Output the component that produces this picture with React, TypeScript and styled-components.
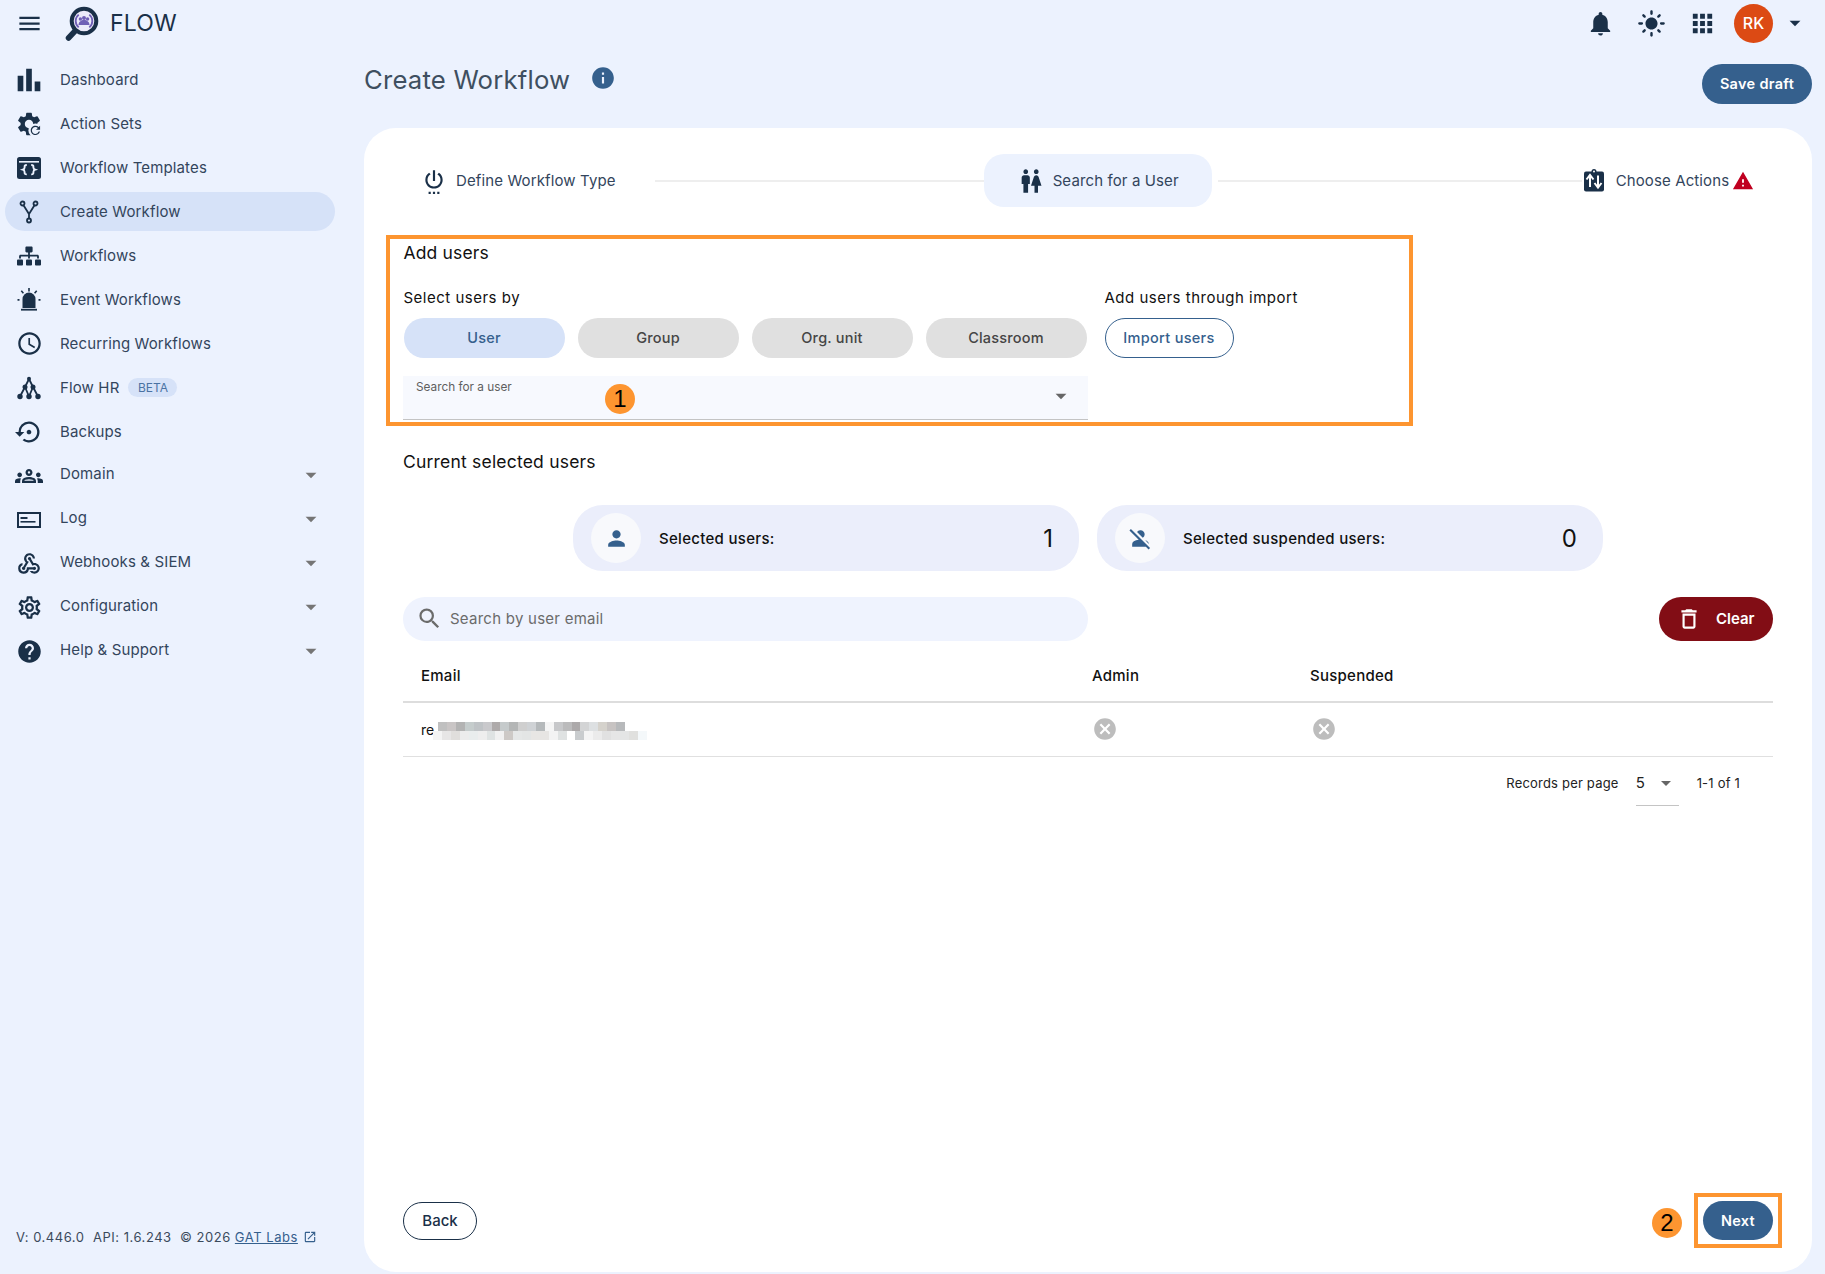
import React from 'react';
import styled, { createGlobalStyle } from 'styled-components';
import {
  MdMenu, MdBarChart, MdOutlineSchedule, MdSettingsBackupRestore, MdOutlineGroups, MdWebhook,
  MdOutlineSettings, MdHelp, MdNotifications, MdLightMode, MdApps, MdInfo, MdSettingsPower, MdWc,
  MdWarning, MdPerson, MdPersonOff, MdSearch, MdDeleteOutline, MdCancel, MdOpenInNew, MdArrowDropDown,
} from 'react-icons/md';
import { FaSitemap } from 'react-icons/fa';

const ink = '#1a3048';
const blue = '#35608d';
const orange = '#fd9530';

const GlobalStyle = createGlobalStyle`
  html, body { margin: 0; padding: 0; background: #ecf2fe; }
  body { font-family: Inter, "Noto Sans", sans-serif; color: ${ink}; }
  * { box-sizing: border-box; }
  svg { flex: none; }
`;

const Page = styled.div`
  width: 1825px;
  height: 1274px;
  display: flex;
  flex-direction: column;
  overflow: hidden;
`;

const Topbar = styled.header`
  height: 46px;
  flex: none;
  display: flex;
  align-items: center;
  padding: 0 17px 0 16px;
`;

const MenuButton = styled.span`
  width: 26px;
  display: flex;
  justify-content: center;
  color: ${ink};
`;

const Brand = styled.div`
  display: flex;
  align-items: center;
  margin-left: 22px;
  gap: 8px;
  font-size: 23px;
  letter-spacing: 0.2px;
  color: ${ink};
`;

const TopActions = styled.div`
  margin-left: auto;
  display: flex;
  align-items: center;
  color: ${ink};
`;

const TopIcon = styled.span`
  width: 51px;
  display: flex;
  justify-content: center;
`;

const Avatar = styled.span`
  width: 39px;
  height: 39px;
  border-radius: 50%;
  background: #dc4a14;
  color: #fff;
  font-size: 16px;
  font-weight: 500;
  display: flex;
  align-items: center;
  justify-content: center;
  margin-left: 6px;
`;

const AvatarCaret = styled.span`
  display: flex;
  margin-left: 9px;
`;

const Body = styled.div`
  flex: 1;
  display: flex;
  min-height: 0;
`;

const Sidebar = styled.aside`
  width: 364px;
  flex: none;
  display: flex;
  flex-direction: column;
  padding-top: 14px;
`;

const NavItem = styled.div<{ $active?: boolean }>`
  width: 330px;
  height: 39px;
  margin: 0 0 5px 5px;
  padding: 0 12px;
  border-radius: 20px;
  display: flex;
  align-items: center;
  background: ${(p) => (p.$active ? '#d6e2f8' : 'transparent')};
`;

const NavIcon = styled.span`
  width: 24px;
  height: 24px;
  flex: none;
  display: flex;
  align-items: center;
  justify-content: center;
  color: ${ink};
`;

const NavLabel = styled.span<{ $lifted?: boolean }>`
  margin-left: 19px;
  font-size: 15px;
  letter-spacing: 0.13px;
  color: #33455c;
  padding-bottom: ${(p) => (p.$lifted ? '5px' : '0')};
`;

const BetaChip = styled.span`
  margin-left: 9px;
  width: 49px;
  height: 19px;
  border-radius: 10px;
  background: #d6e2f8;
  color: #4a72a3;
  font-size: 12px;
  display: flex;
  align-items: center;
  justify-content: center;
`;

const NavCaret = styled.span`
  margin-left: auto;
  margin-right: -1px;
  margin-bottom: 1px;
  display: flex;
  color: #757575;
`;

const SideFooter = styled.div`
  margin-top: auto;
  padding: 0 0 29px 16px;
  height: 45px;
  display: flex;
  align-items: center;
  font-size: 13px;
  letter-spacing: 0.53px;
  color: #3b4a5c;
  white-space: pre;
`;

const FooterLink = styled.a`
  color: ${blue};
  text-decoration: underline;
  margin-left: 4px;
`;

const FooterLinkIcon = styled.span`
  display: flex;
  margin-left: 5px;
  color: ${blue};
`;

const Content = styled.main`
  flex: 1;
  display: flex;
  flex-direction: column;
  padding: 0 13px 2px 0;
  min-width: 0;
`;

const TitleRow = styled.div`
  height: 82px;
  flex: none;
  padding-top: 18px;
  display: flex;
  align-items: flex-start;
`;

const PageTitle = styled.h1`
  margin: 0;
  height: 30px;
  line-height: 31px;
  font-size: 25.7px;
  font-weight: 400;
  letter-spacing: 0.2px;
  color: #3e4f60;
`;

const InfoIcon = styled.span`
  margin: 1px 0 0 20px;
  display: flex;
  color: ${blue};
`;

const PrimaryButton = styled.button`
  height: 40px;
  border: 0;
  border-radius: 20px;
  background: ${blue};
  color: #fff;
  font: 600 14.5px Inter, sans-serif;
  letter-spacing: 0.3px;
  padding: 0 0 2px;
`;

const SaveDraft = styled(PrimaryButton)`
  margin-left: auto;
  width: 110px;
`;

const Panel = styled.section`
  flex: 1;
  background: #fff;
  border-radius: 32px;
  padding: 26px 39px 24px;
  display: flex;
  flex-direction: column;
  min-height: 0;
`;

const Stepper = styled.div`
  height: 53px;
  flex: none;
  display: flex;
  align-items: center;
  padding-left: 19px;
`;

const Step = styled.div<{ $active?: boolean; $trail?: number }>`
  height: 53px;
  display: flex;
  align-items: center;
  gap: 10px;
  font-size: 15px;
  letter-spacing: 0.12px;
  color: #33455c;
  flex: none;
  padding-right: ${(p) => p.$trail ?? 0}px;
  ${(p) =>
    p.$active
      ? `
    width: 228px;
    padding-left: 35px;
    margin-right: 6px;
    border-radius: 20px;
    background: #ecf2fe;
  `
      : ''}
`;

const StepIcon = styled.span`
  width: 24px;
  display: flex;
  justify-content: center;
  color: ${ink};
`;

const StepWarning = styled.span`
  display: flex;
  margin-left: -7px;
  color: #c00020;
`;

const StepLine = styled.span<{ $w: number }>`
  width: ${(p) => p.$w}px;
  height: 2px;
  flex: none;
  background: #eeeeee;
`;

const AddBox = styled.div`
  margin: 28px 0 0 -17px;
  width: 1027px;
  height: 191px;
  flex: none;
  border: 4px solid ${orange};
  padding: 0 13.5px;
  position: relative;
  display: flex;
  flex-direction: column;
`;

const BoxTitle = styled.div`
  margin-top: 4px;
  line-height: 20px;
  font-size: 17.5px;
  color: #111;
  letter-spacing: 0.15px;
`;

const PickRow = styled.div`
  margin-top: 25px;
  display: flex;
  gap: 18px;
`;

const PickColumn = styled.div`
  display: flex;
  flex-direction: column;
`;

const PickLabel = styled.div`
  line-height: 20px;
  font-size: 15px;
  letter-spacing: 0.5px;
  color: #111;
  margin-bottom: 10px;
`;

const Choices = styled.div`
  display: flex;
  gap: 13px;
`;

const Choice = styled.button<{ $active?: boolean }>`
  width: 161px;
  height: 40px;
  border: 0;
  border-radius: 20px;
  padding: 0 0 2px;
  background: ${(p) => (p.$active ? '#d6e2f8' : '#e0e0e0')};
  color: ${(p) => (p.$active ? blue : '#454545')};
  font: 500 14.5px Inter, sans-serif;
  letter-spacing: 0.2px;
`;

const ImportButton = styled.button`
  width: 129px;
  height: 40px;
  border: 1.5px solid ${blue};
  border-radius: 20px;
  background: #fff;
  padding: 0 0 2px;
  color: ${blue};
  font: 500 14.5px Inter, sans-serif;
  letter-spacing: 0.3px;
`;

const UserField = styled.div`
  margin: 18px 0 0 -0.5px;
  width: 685px;
  height: 44px;
  background: #f7f9fe;
  border-bottom: 1px solid #c4c4c4;
  padding: 4px 13px 0;
  position: relative;
  font-size: 11.8px;
  color: #5f5f5f;
`;

const FieldCaret = styled.span`
  position: absolute;
  right: 14px;
  top: 7px;
  display: flex;
  color: #666;
`;

const NumberBadge = styled.span`
  width: 30px;
  height: 30px;
  border-radius: 50%;
  background: ${orange};
  color: #000;
  font: 400 24px "Liberation Sans", Arial, sans-serif;
  display: flex;
  align-items: center;
  justify-content: center;
  flex: none;
`;

const FieldBadge = styled(NumberBadge)`
  position: absolute;
  left: 202px;
  top: 8px;
`;

const NextBadge = styled(NumberBadge)`
  margin-top: 5px;
`;

const SectionTitle = styled.div`
  margin-top: 26px;
  line-height: 20px;
  font-size: 17.5px;
  letter-spacing: 0.2px;
  color: #111;
`;

const StatRow = styled.div`
  margin-top: 33px;
  display: flex;
  justify-content: center;
  gap: 18px;
`;

const StatCard = styled.div`
  width: 506px;
  height: 66px;
  border-radius: 30px;
  background: #ebeefb;
  display: flex;
  align-items: center;
  padding: 0 26px 0 18px;
`;

const StatIcon = styled.span`
  width: 50px;
  height: 50px;
  border-radius: 50%;
  background: #f8f9fc;
  color: ${blue};
  display: flex;
  align-items: center;
  justify-content: center;
`;

const StatLabel = styled.span`
  margin-left: 18px;
  font-size: 15px;
  font-weight: 500;
  letter-spacing: 0.3px;
  color: #111;
`;

const StatValue = styled.span`
  margin-left: auto;
  font-size: 24px;
  color: #111;
`;

const Toolbar = styled.div`
  margin-top: 26px;
  height: 44px;
  flex: none;
  display: flex;
  justify-content: space-between;
`;

const SearchBox = styled.div`
  width: 685px;
  height: 44px;
  border-radius: 22px;
  background: #eff3fe;
  display: flex;
  align-items: center;
  padding: 0 0 1px 13px;
  gap: 7px;
  font-size: 15px;
  letter-spacing: 0.25px;
  color: #6b6b6b;
`;

const ClearButton = styled.button`
  width: 114px;
  height: 44px;
  border: 0;
  border-radius: 22px;
  background: #820d15;
  color: #fff;
  font: 600 15px Inter, sans-serif;
  display: flex;
  align-items: center;
  padding: 0 0 1px 20px;
  gap: 17px;
`;

const TrashIcon = styled.span`
  display: flex;
  margin: 0 -3px;
`;

const TableRow = styled.div<{ $head?: boolean }>`
  display: grid;
  grid-template-columns: 671px 218px 1fr;
  height: ${(p) => (p.$head ? '62px' : '54px')};
  align-items: center;
  border-bottom: ${(p) => (p.$head ? '2px solid #dddddd' : '1px solid #e0e0e0')};
  padding: ${(p) => (p.$head ? '8px 0 0' : '0 0 1px')};
`;

const HeadCell = styled.div`
  padding-left: 18px;
  font-size: 15px;
  font-weight: 500;
  letter-spacing: 0.25px;
  color: #111;
`;

const Cell = styled.div<{ $nudge?: number }>`
  padding-left: ${(p) => 18 + (p.$nudge ?? 0)}px;
  font-size: 14px;
  display: flex;
  align-items: center;
  color: #111;
`;

const BlurredEmail = styled.div`
  margin-left: -1px;
  margin-top: 3px;
  display: flex;
  flex-direction: column;
`;

const BlurRow = styled.div<{ $inset?: boolean }>`
  display: flex;
  height: 9px;
  margin-left: ${(p) => (p.$inset ? '5px' : '0')};
`;

const BlurCell = styled.span<{ $c: string }>`
  width: 8.9px;
  background: ${(p) => p.$c};
`;

const StatusIcon = styled.span`
  display: flex;
  color: #bdbdbd;
`;

const Pagination = styled.div`
  flex: none;
  display: flex;
  align-items: flex-start;
  justify-content: flex-end;
  padding: 18px 33px 0 0;
  line-height: 16px;
  font-size: 13px;
  letter-spacing: 0.2px;
  color: #222;
`;

const PageSize = styled.div`
  margin-left: 17px;
  width: 43px;
  height: 31px;
  display: flex;
  align-items: flex-start;
  justify-content: space-between;
  border-bottom: 1px solid #c4c4c4;
  font-size: 15px;
`;

const PageSizeCaret = styled.span`
  display: flex;
  color: #666;
  margin: -4px 1px 0 0;
`;

const PageRange = styled.span`
  margin-left: 18px;
`;

const PanelFooter = styled.div`
  margin-top: auto;
  display: flex;
  align-items: center;
  justify-content: space-between;
`;

const BackButton = styled.button`
  width: 74px;
  height: 38px;
  border: 1.5px solid ${ink};
  border-radius: 19px;
  background: #fff;
  color: ${ink};
  font: 500 15px Inter, sans-serif;
`;

const NextGroup = styled.div`
  display: flex;
  align-items: center;
  gap: 12px;
  margin-right: -9px;
`;

const NextFrame = styled.div`
  width: 88px;
  height: 55px;
  border: 4px solid ${orange};
  display: flex;
  align-items: center;
  justify-content: center;
`;

const NextButton = styled(PrimaryButton)`
  width: 70px;
  height: 39px;
  padding: 0;
`;

const Logo = () => (
  <svg width="38" height="38" viewBox="0 0 38 38">
    <line x1="12" y1="26" x2="4.5" y2="34" stroke={ink} strokeWidth="5.5" strokeLinecap="round" />
    <circle cx="20" cy="17" r="12.3" fill="#ebeaf9" stroke={ink} strokeWidth="4" />
    <path d="M14.7 10.6a8.3 8.3 0 0 0 0 12.8M25.3 10.6a8.3 8.3 0 0 1 0 12.8" fill="none" stroke="#6f5fb5" strokeWidth="1.8" />
    <circle cx="20" cy="14" r="2" fill="#6f5fb5" />
    <circle cx="16.4" cy="15" r="1.7" fill="#6f5fb5" />
    <circle cx="23.6" cy="15" r="1.7" fill="#6f5fb5" />
    <path d="M14.5 21c0-3 2.5-5 5.5-5s5.5 2 5.5 5z" fill="#6f5fb5" />
  </svg>
);

const gearPath =
  'M19.14 12.94c.04-.3.06-.61.06-.94 0-.32-.02-.64-.07-.94l2.03-1.58a.49.49 0 0 0 .12-.61l-1.92-3.32a.488.488 0 0 0-.59-.22l-2.39.96c-.5-.38-1.03-.7-1.62-.94l-.36-2.54a.484.484 0 0 0-.48-.41h-3.84c-.24 0-.43.17-.47.41l-.36 2.54c-.59.24-1.13.57-1.62.94l-2.39-.96c-.22-.08-.47 0-.59.22L2.74 8.87c-.12.21-.08.47.12.61l2.03 1.58c-.05.3-.09.63-.09.94s.02.64.07.94l-2.03 1.58a.49.49 0 0 0-.12.61l1.92 3.32c.12.22.37.29.59.22l2.39-.96c.5.38 1.03.7 1.62.94l.36 2.54c.05.24.24.41.48.41h3.84c.24 0 .44-.17.47-.41l.36-2.54c.59-.24 1.13-.56 1.62-.94l2.39.96c.22.08.47 0 .59-.22l1.92-3.32c.12-.22.07-.47-.12-.61l-2.01-1.58zM12 15.6c-1.98 0-3.6-1.62-3.6-3.6s1.62-3.6 3.6-3.6 3.6 1.62 3.6 3.6-1.62 3.6-3.6 3.6z';

const ActionSetsIcon = () => (
  <svg width="28" height="28" viewBox="0 0 24 24" fill="currentColor">
    <path d={gearPath} />
    <circle cx="17.5" cy="17.5" r="6" fill="#ecf2fe" />
    <path
      transform="translate(11.5 11.5) scale(.5)"
      d="M17.65 6.35A7.958 7.958 0 0 0 12 4c-4.42 0-7.99 3.58-7.99 8s3.57 8 7.99 8c3.73 0 6.84-2.55 7.73-6h-2.08A5.99 5.99 0 0 1 12 18c-3.31 0-6-2.69-6-6s2.69-6 6-6c1.66 0 3.14.69 4.22 1.78L13 11h7V4l-2.35 2.35z"
    />
  </svg>
);

const TemplatesIcon = () => (
  <svg width="24" height="24" viewBox="0 0 24 24">
    <rect x="0" y="1" width="24" height="22" rx="2.5" fill={ink} />
    <rect x="2" y="5" width="20" height="1.6" fill="#ecf2fe" />
    <path
      d="M9.8 9c-2.4 0-2.2 1.2-2.2 2.4s-.3 1.8-1.8 2.3c1.5.5 1.8 1.1 1.8 2.3s-.2 2.4 2.2 2.4M14.2 9c2.4 0 2.2 1.2 2.2 2.4s.3 1.8 1.8 2.3c-1.5.5-1.8 1.1-1.8 2.3s.2 2.4-2.2 2.4"
      fill="none"
      stroke="#ecf2fe"
      strokeWidth="1.9"
    />
  </svg>
);

const ForkIcon = () => (
  <svg width="24" height="24" viewBox="0 0 24 24" fill="none" stroke={ink} strokeWidth="1.8">
    <circle cx="5.5" cy="3.5" r="2" />
    <circle cx="18.5" cy="3.5" r="2" />
    <circle cx="12" cy="20.5" r="2" />
    <path d="M6.5 5.3 12 14l5.5-8.7M12 14v4.5" />
  </svg>
);

const SirenIcon = () => (
  <svg width="24" height="24" viewBox="0 0 24 24" fill={ink}>
    <path d="M5.5 20v-9a6.5 6.5 0 0 1 13 0v9z" />
    <rect x="4" y="20.8" width="16" height="1.8" />
    <path d="M11.2 0h1.6v3.4h-1.6zM3.7 3.2l1.2-1 2.1 2.6-1.2 1zM19.1 2.2l1.2 1-2.1 2.6-1.2-1zM.5 11h2v1.8h-2zM21.5 11h2v1.8h-2z" />
  </svg>
);

const FlowHrIcon = () => (
  <svg width="24" height="24" viewBox="0 0 24 24" fill={ink} stroke={ink} strokeWidth="1.8">
    <path d="M12 3 8 11l-5 9.5M8 11l4 9.5M12 3l4 8 5 9.5M16 11l-4 9.5" fill="none" />
    <circle cx="12" cy="2.8" r="2" stroke="none" />
    <circle cx="8" cy="11" r="2.5" stroke="none" />
    <circle cx="16" cy="11" r="2.5" stroke="none" />
    <circle cx="3" cy="20.5" r="2.7" stroke="none" />
    <circle cx="12" cy="20.5" r="2.7" stroke="none" />
    <circle cx="21" cy="20.5" r="2.7" stroke="none" />
  </svg>
);

const LogIcon = () => (
  <svg width="24" height="24" viewBox="0 0 24 24" fill="none">
    <rect x="1" y="5" width="22" height="14" stroke={ink} strokeWidth="2" />
    <rect x="3.5" y="9" width="7" height="2" fill={ink} />
    <rect x="3.5" y="13" width="15" height="1.6" fill={ink} />
  </svg>
);

const ChooseActionsIcon = () => (
  <svg width="22" height="23" viewBox="0 0 22 23">
    <rect x="1" y="2.5" width="20" height="20" rx="2" fill={ink} />
    <circle cx="11" cy="2.5" r="2.5" fill={ink} />
    <circle cx="11" cy="2.5" r="1" fill="#fff" />
    <path
      d="M7 18V7M3.5 10.5 7 6l3.5 4.5M15 6.5v11.5M11.5 14 15 18.5l3.5-4.5"
      fill="none"
      stroke="#fff"
      strokeWidth="2"
    />
  </svg>
);

const navItems: { label: string; icon: React.ReactNode; beta?: boolean; active?: boolean; expand?: boolean }[] = [
  { label: 'Dashboard', icon: <MdBarChart size={34} /> },
  { label: 'Action Sets', icon: <ActionSetsIcon /> },
  { label: 'Workflow Templates', icon: <TemplatesIcon /> },
  { label: 'Create Workflow', icon: <ForkIcon />, active: true },
  { label: 'Workflows', icon: <FaSitemap size={24} /> },
  { label: 'Event Workflows', icon: <SirenIcon /> },
  { label: 'Recurring Workflows', icon: <MdOutlineSchedule size={27} /> },
  { label: 'Flow HR', icon: <FlowHrIcon />, beta: true },
  { label: 'Backups', icon: <MdSettingsBackupRestore size={28} /> },
  { label: 'Domain', icon: <MdOutlineGroups size={28} />, expand: true },
  { label: 'Log', icon: <LogIcon />, expand: true },
  { label: 'Webhooks & SIEM', icon: <MdWebhook size={26} />, expand: true },
  { label: 'Configuration', icon: <MdOutlineSettings size={27} />, expand: true },
  { label: 'Help & Support', icon: <MdHelp size={27} />, expand: true },
];

const blurTop = [
  '#c0c0c0', '#c9c5c5', '#b3b3b3', '#c5cccc', '#bfc3c6', '#c9c9cc', '#aeaaaa', '#c5cacb', '#b4b6b6', '#cfcfcf', '#cfd2d5',
  '#b5b9bb', '#f5f5f5', '#c7c8ca', '#bbbbbc', '#aca9aa', '#d3d4d5', '#dde0e2', '#d5d2cc', '#c7c3c2', '#b7b9bb',
];
const blurBottom = [
  '#f4f4f4', '#e7e6e6', '#e0dedc', '#ececec', '#e9eded', '#eeeeee', '#dfe3e3', '#f1f1f1', '#cdc9c6', '#e5e7e7', '#e3e5e5', '#e8e6e4',
  '#e7e5e3', '#f3f3f3', '#dfe2e2', '#ffffff', '#c9ccce', '#f4f4f4', '#ebebeb', '#e1e1e1', '#e6e6e6', '#e4e5e5', '#e0e0de', '#f4f8fa',
];

export default function App() {
  return (
    <Page>
      <GlobalStyle />
      <Topbar>
        <MenuButton>
          <MdMenu size={27} />
        </MenuButton>
        <Brand>
          <Logo />
          FLOW
        </Brand>
        <TopActions>
          <TopIcon>
            <MdNotifications size={29} />
          </TopIcon>
          <TopIcon>
            <MdLightMode size={29} />
          </TopIcon>
          <TopIcon>
            <MdApps size={29} />
          </TopIcon>
          <Avatar>RK</Avatar>
          <AvatarCaret>
            <MdArrowDropDown size={26} />
          </AvatarCaret>
        </TopActions>
      </Topbar>
      <Body>
        <Sidebar>
          {navItems.map((item) => (
            <NavItem key={item.label} $active={item.active}>
              <NavIcon>{item.icon}</NavIcon>
              <NavLabel $lifted={item.expand}>{item.label}</NavLabel>
              {item.beta && <BetaChip>BETA</BetaChip>}
              {item.expand && (
                <NavCaret>
                  <MdArrowDropDown size={26} />
                </NavCaret>
              )}
            </NavItem>
          ))}
          <SideFooter>
            {'V: 0.446.0  API: 1.6.243  © 2026'}
            <FooterLink>GAT Labs</FooterLink>
            <FooterLinkIcon>
              <MdOpenInNew size={14} />
            </FooterLinkIcon>
          </SideFooter>
        </Sidebar>
        <Content>
          <TitleRow>
            <PageTitle>Create Workflow</PageTitle>
            <InfoIcon>
              <MdInfo size={26} />
            </InfoIcon>
            <SaveDraft>Save draft</SaveDraft>
          </TitleRow>
          <Panel>
            <Stepper>
              <Step $trail={39}>
                <StepIcon>
                  <MdSettingsPower size={26} />
                </StepIcon>
                Define Workflow Type
              </Step>
              <StepLine $w={329} />
              <Step $active>
                <StepIcon>
                  <MdWc size={28} />
                </StepIcon>
                Search for a User
              </Step>
              <StepLine $w={364} />
              <Step>
                <StepIcon>
                  <ChooseActionsIcon />
                </StepIcon>
                <span>Choose Actions</span>
                <StepWarning>
                  <MdWarning size={22} />
                </StepWarning>
              </Step>
            </Stepper>
            <AddBox>
              <BoxTitle>Add users</BoxTitle>
              <PickRow>
                <PickColumn>
                  <PickLabel>Select users by</PickLabel>
                  <Choices>
                    <Choice $active>User</Choice>
                    <Choice>Group</Choice>
                    <Choice>Org. unit</Choice>
                    <Choice>Classroom</Choice>
                  </Choices>
                </PickColumn>
                <PickColumn>
                  <PickLabel>Add users through import</PickLabel>
                  <ImportButton>Import users</ImportButton>
                </PickColumn>
              </PickRow>
              <UserField>
                Search for a user
                <FieldBadge>1</FieldBadge>
                <FieldCaret>
                  <MdArrowDropDown size={26} />
                </FieldCaret>
              </UserField>
            </AddBox>
            <SectionTitle>Current selected users</SectionTitle>
            <StatRow>
              <StatCard>
                <StatIcon>
                  <MdPerson size={25} />
                </StatIcon>
                <StatLabel>Selected users:</StatLabel>
                <StatValue>1</StatValue>
              </StatCard>
              <StatCard>
                <StatIcon>
                  <MdPersonOff size={25} />
                </StatIcon>
                <StatLabel>Selected suspended users:</StatLabel>
                <StatValue>0</StatValue>
              </StatCard>
            </StatRow>
            <Toolbar>
              <SearchBox>
                <MdSearch size={27} color="#6b6b6b" />
                Search by user email
              </SearchBox>
              <ClearButton>
                <TrashIcon>
                  <MdDeleteOutline size={26} />
                </TrashIcon>
                Clear
              </ClearButton>
            </Toolbar>
            <TableRow $head>
              <HeadCell>Email</HeadCell>
              <HeadCell>Admin</HeadCell>
              <HeadCell>Suspended</HeadCell>
            </TableRow>
            <TableRow>
              <Cell>
                re
                <BlurredEmail>
                  <BlurRow $inset>
                    {blurTop.map((c, i) => (
                      <BlurCell key={i} $c={c} />
                    ))}
                  </BlurRow>
                  <BlurRow>
                    {blurBottom.map((c, i) => (
                      <BlurCell key={i} $c={c} />
                    ))}
                  </BlurRow>
                </BlurredEmail>
              </Cell>
              <Cell>
                <StatusIcon>
                  <MdCancel size={26} />
                </StatusIcon>
              </Cell>
              <Cell $nudge={1}>
                <StatusIcon>
                  <MdCancel size={26} />
                </StatusIcon>
              </Cell>
            </TableRow>
            <Pagination>
              Records per page
              <PageSize>
                5
                <PageSizeCaret>
                  <MdArrowDropDown size={24} />
                </PageSizeCaret>
              </PageSize>
              <PageRange>1-1 of 1</PageRange>
            </Pagination>
            <PanelFooter>
              <BackButton>Back</BackButton>
              <NextGroup>
                <NextBadge>2</NextBadge>
                <NextFrame>
                  <NextButton>Next</NextButton>
                </NextFrame>
              </NextGroup>
            </PanelFooter>
          </Panel>
        </Content>
      </Body>
    </Page>
  );
}
